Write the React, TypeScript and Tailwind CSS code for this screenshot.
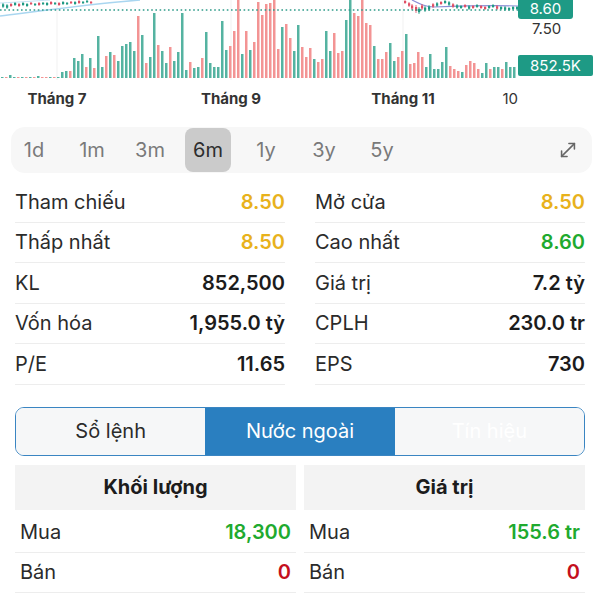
import { MoveDiagonal } from 'lucide-react';

const GREEN = '#55b3a1';
const RED = '#f39494';

// volume bars: [height, color] g = up, r = down
const VOLUME: [number, 'g' | 'r'][] = [
  [1, 'g'], [1, 'r'], [3, 'g'], [1, 'g'], [1, 'r'], [1, 'g'], [1, 'r'], [1, 'g'],
  [1, 'r'], [2, 'g'], [1, 'r'], [1, 'r'], [1, 'g'], [1, 'r'], [1, 'g'],
  [6, 'g'], [7, 'g'], [7, 'r'], [20, 'g'], [17, 'g'], [24, 'g'], [11, 'r'], [20, 'g'],
  [10, 'r'], [42, 'g'], [11, 'g'], [22, 'r'], [26, 'g'], [23, 'r'], [17, 'g'], [32, 'g'],
  [34, 'g'], [36, 'g'], [27, 'g'], [62, 'r'], [43, 'g'], [15, 'r'], [21, 'g'], [65, 'g'],
  [33, 'r'], [27, 'g'], [15, 'g'], [31, 'r'], [17, 'g'], [26, 'g'], [65, 'g'], [8, 'g'],
  [16, 'r'], [10, 'g'], [11, 'g'], [20, 'r'], [46, 'g'], [15, 'g'], [11, 'g'], [11, 'g'],
  [57, 'g'], [28, 'g'], [32, 'r'], [47, 'r'], [80, 'r'], [24, 'g'], [47, 'r'], [28, 'g'],
  [36, 'r'], [76, 'r'], [63, 'r'], [74, 'r'], [75, 'r'], [80, 'r'], [29, 'r'], [51, 'g'],
  [54, 'r'], [40, 'r'], [27, 'g'], [53, 'g'], [31, 'r'], [21, 'r'], [30, 'r'], [19, 'g'],
  [16, 'r'], [19, 'r'], [47, 'g'], [27, 'g'], [45, 'r'], [25, 'r'], [27, 'r'], [58, 'g'],
  [80, 'g'], [65, 'r'], [62, 'r'], [80, 'r'], [55, 'r'], [53, 'r'], [32, 'g'], [19, 'r'],
  [19, 'r'], [26, 'r'], [35, 'g'], [17, 'g'], [21, 'r'], [27, 'r'], [44, 'g'], [14, 'r'],
  [15, 'r'], [26, 'r'], [21, 'r'], [11, 'g'], [24, 'g'], [9, 'g'], [9, 'g'], [16, 'g'],
  [31, 'g'], [12, 'r'], [9, 'r'], [7, 'r'], [6, 'g'], [13, 'r'], [17, 'r'], [15, 'r'],
  [9, 'r'], [5, 'g'], [15, 'g'], [9, 'r'], [11, 'g'], [11, 'g'], [9, 'r'], [16, 'g'],
  [11, 'g'], [11, 'g'],
];

// candles: [x, top, bottom, color]
const CANDLES: [number, number, number, 'g' | 'r'][] = [
  [2, 3, 8, 'g'], [6, 4, 9, 'g'], [10, 3, 7, 'r'], [14, 2, 6, 'g'], [18, 3, 7, 'r'],
  [22, 2, 6, 'g'], [26, 3, 7, 'g'], [30, 2, 5, 'r'], [34, 3, 6, 'g'], [38, 2, 6, 'r'],
  [42, 2, 5, 'g'], [46, 2, 6, 'g'], [50, 1, 5, 'r'], [54, 2, 5, 'g'], [58, 2, 6, 'r'],
  [62, 1, 5, 'g'], [66, 2, 5, 'g'], [70, 1, 4, 'r'], [74, 1, 5, 'g'], [78, 0, 4, 'r'],
  [82, 1, 4, 'g'], [86, 0, 3, 'g'], [90, 1, 4, 'r'],
  [404, 0, 4, 'r'], [408, 2, 7, 'r'], [411, 4, 10, 'r'], [415, 5, 13, 'r'], [418, 7, 14, 'g'],
  [421, 4, 10, 'r'], [424, 6, 12, 'g'], [428, 5, 11, 'g'], [432, 3, 8, 'r'], [436, 2, 7, 'g'],
  [440, 1, 5, 'r'], [444, 0, 4, 'g'], [448, 1, 6, 'g'], [452, 3, 8, 'r'], [456, 4, 9, 'g'],
  [460, 5, 9, 'g'], [464, 4, 8, 'r'], [468, 5, 10, 'g'], [472, 5, 9, 'r'], [476, 4, 8, 'g'],
  [480, 5, 9, 'r'], [484, 6, 10, 'r'], [488, 5, 9, 'g'], [492, 4, 8, 'g'], [496, 5, 10, 'r'],
  [500, 6, 10, 'g'], [504, 6, 11, 'g'], [508, 7, 11, 'g'], [512, 6, 10, 'g'], [516, 6, 10, 'g'],
];

const PERIODS = ['1d', '1m', '3m', '6m', '1y', '3y', '5y'];

const STATS: { label: string; value: string; color?: string }[][] = [
  [
    { label: 'Tham chiếu', value: '8.50', color: 'text-[#e8b21c]' },
    { label: 'Mở cửa', value: '8.50', color: 'text-[#e8b21c]' },
  ],
  [
    { label: 'Thấp nhất', value: '8.50', color: 'text-[#e8b21c]' },
    { label: 'Cao nhất', value: '8.60', color: 'text-[#1faa2f]' },
  ],
  [
    { label: 'KL', value: '852,500' },
    { label: 'Giá trị', value: '7.2 tỷ' },
  ],
  [
    { label: 'Vốn hóa', value: '1,955.0 tỷ' },
    { label: 'CPLH', value: '230.0 tr' },
  ],
  [
    { label: 'P/E', value: '11.65' },
    { label: 'EPS', value: '730' },
  ],
];

function Chart() {
  return (
    <svg width={518} height={116} viewBox="0 0 518 116" className="block shrink-0">
      {/* month grid lines */}
      {[57, 231, 403].map((x) => (
        <line key={x} x1={x} y1={0} x2={x} y2={80} stroke="#f1f1f1" strokeWidth={1} />
      ))}

      {/* volume */}
      {VOLUME.map(([h, c], i) => (
        <rect
          key={i}
          x={1 + i * 4}
          y={78 - Math.min(h, 78)}
          width={2.5}
          height={Math.min(h, 78)}
          fill={c === 'g' ? GREEN : RED}
        />
      ))}

      {/* moving averages */}
      <path d="M0 16 C 40 11, 90 4, 140 0" fill="none" stroke="#a9d6f0" strokeWidth={1.5} />
      <path d="M0 3 C 20 2, 35 1, 50 0" fill="none" stroke="#c6e3f5" strokeWidth={1} />
      <path d="M412 0 C 420 4, 426 7, 434 7 C 460 6, 490 5, 518 6" fill="none" stroke="#8b8fd6" strokeWidth={1.2} />

      {/* candles */}
      {CANDLES.map(([x, t, b, c], i) => (
        <g key={i}>
          <line x1={x + 1} y1={t} x2={x + 1} y2={b} stroke={c === 'g' ? '#1f9a84' : '#e04e63'} strokeWidth={0.8} />
          <rect
            x={x}
            y={t + (b - t) * 0.25}
            width={2.2}
            height={Math.max((b - t) * 0.5, 1.2)}
            fill={c === 'g' ? '#1f9a84' : '#e04e63'}
          />
        </g>
      ))}

      {/* reference price */}
      <line x1={0} y1={10} x2={518} y2={10} stroke="#2f9c8a" strokeWidth={1.6} strokeDasharray="1.6 2.6" />

      {/* month labels */}
      <g fontFamily="Inter, 'Liberation Sans', sans-serif" fontSize={15} fill="#333">
        <text x={57} y={104} textAnchor="middle" fontWeight={700}>Tháng 7</text>
        <text x={231} y={104} textAnchor="middle" fontWeight={700}>Tháng 9</text>
        <text x={403} y={104} textAnchor="middle" fontWeight={700}>Tháng 11</text>
        <text x={518} y={104} textAnchor="end" fontWeight={400}>10</text>
      </g>
    </svg>
  );
}

function PriceAxis() {
  return (
    <div className="flex flex-col items-start text-[15px] leading-none">
      <div className="-mt-[3px] flex h-[22px] w-[55px] items-center justify-center rounded-[3px] bg-[#1e9a85] text-white">
        8.60
      </div>
      <div className="flex h-[18px] items-center pl-[14px] text-[#333]">7.50</div>
      <div className="mt-[18px] flex h-[21px] w-[75px] items-center justify-center rounded-[2px] bg-[#1e9a85] text-white">
        852.5K
      </div>
    </div>
  );
}

export default function App() {
  return (
    <div className="h-[600px] w-[600px] overflow-hidden bg-white font-['Inter','Liberation_Sans',sans-serif] text-[#2b2b2b]">
      {/* Chart */}
      <div className="flex">
        <Chart />
        <PriceAxis />
      </div>

      {/* Period tabs */}
      <div className="ml-[11px] mt-[11px] flex h-[46px] w-[581px] items-center gap-[12px] rounded-[14px] bg-[#f7f7f7]">
        {PERIODS.map((p) => (
          <div
            key={p}
            className={
              p === '6m'
                ? 'flex h-[44px] w-[46px] items-center justify-center rounded-[8px] bg-[#cbcbcb] text-[20px] text-[#2e2e2e]'
                : 'flex h-[44px] w-[46px] items-center justify-center text-[20px] text-[#7a7a7a]'
            }
          >
            {p}
          </div>
        ))}
        <MoveDiagonal className="ml-auto mr-[13px] h-[22px] w-[22px] text-[#666]" strokeWidth={1.7} />
      </div>

      {/* Stats */}
      <div className="mt-[9px] grid grid-cols-2 gap-x-[30px] px-[15px]">
        {STATS.map((row) =>
          row.map((s) => (
            <div
              key={s.label}
              className="flex h-[40.5px] items-center justify-between border-b border-[#ededed] text-[20px]"
            >
              <span className="text-[#2b2b2b]">{s.label}</span>
              <span className={`font-semibold ${s.color ?? 'text-[#1c1c1c]'}`}>{s.value}</span>
            </div>
          ))
        )}
      </div>

      {/* Segmented control */}
      <div className="mx-[15px] mt-[22px] flex h-[49px] overflow-hidden rounded-[9px] border-[1.5px] border-[#3a85c2] text-[20px]">
        <div className="flex flex-1 items-center justify-center bg-[#f6f7f8] text-[#2b2b2b]">Sổ lệnh</div>
        <div className="flex flex-1 items-center justify-center bg-[#2a7fc0] text-white">Nước ngoài</div>
        <div className="flex flex-1 items-center justify-center bg-[#f6f7f8] text-white">Tín hiệu</div>
      </div>

      {/* Foreign trading */}
      <div className="mt-[9px] grid grid-cols-2 gap-x-[8px] px-[15px] text-[20px]">
        {[
          { title: 'Khối lượng', buy: '18,300', sell: '0' },
          { title: 'Giá trị', buy: '155.6 tr', sell: '0' },
        ].map((t) => (
          <div key={t.title}>
            <div className="flex h-[45px] items-center justify-center bg-[#f3f3f3] font-bold text-[#1c1c1c]">
              {t.title}
            </div>
            <div className="flex h-[43px] items-center justify-between border-b border-[#ededed] px-[5px] pt-[2px]">
              <span>Mua</span>
              <span className="font-semibold text-[#1faa2f]">{t.buy}</span>
            </div>
            <div className="flex h-[40px] items-center justify-between border-b border-[#ededed] px-[5px]">
              <span>Bán</span>
              <span className="font-semibold text-[#c4101c]">{t.sell}</span>
            </div>
          </div>
        ))}
      </div>
    </div>
  );
}
